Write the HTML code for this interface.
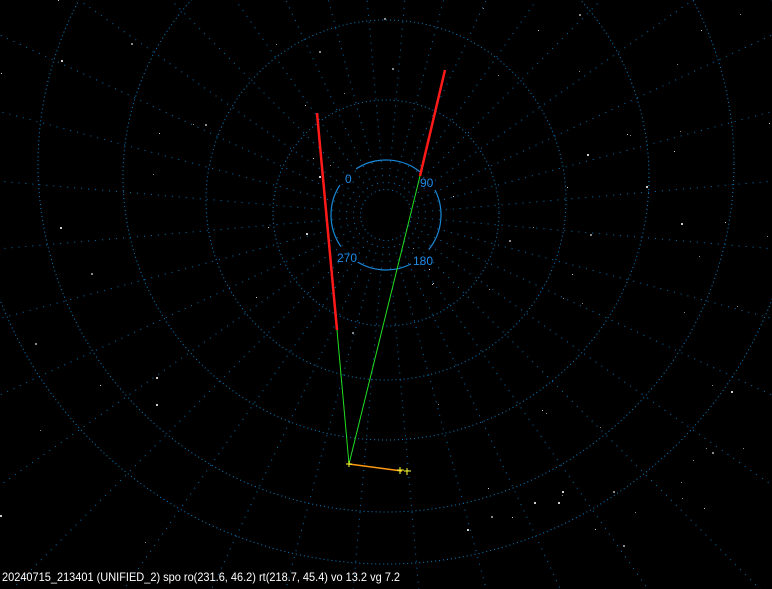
<!DOCTYPE html>
<html><head><meta charset="utf-8"><style>
html,body{margin:0;padding:0;background:#000;width:772px;height:589px;overflow:hidden}
svg{display:block;position:absolute;left:0;top:0}
</style></head><body>
<svg id="s" width="772" height="589" viewBox="0 0 772 589" xmlns="http://www.w3.org/2000/svg">
<rect width="772" height="589" fill="#000"/>
<g id="grid" fill="none" stroke="#0a7fc8" stroke-width="1" stroke-dasharray="1 3">
<circle cx="386" cy="213" r="113"/>
<circle cx="386" cy="200" r="180"/>
<circle cx="386" cy="177" r="263"/>
<circle cx="386" cy="164" r="348"/>
<circle cx="386" cy="150" r="414"/>
</g>
<g id="rad" fill="none" stroke="#0870b4" stroke-width="1" stroke-dasharray="1 6"></g>
<g id="stars"></g>
<g fill="none" stroke="#1a88d8" stroke-width="1.2">
<path id="a1"/><path id="a2"/><path id="a3"/><path id="a4"/>
</g>
<g font-family="Liberation Sans, sans-serif" font-size="12" fill="#1e8ae6">
<text x="345" y="183">0</text>
<text x="420" y="187">90</text>
<text x="337" y="262">270</text>
<text x="413" y="265">180</text>
</g>
<g fill="none">
<polyline points="317,113 337,330" stroke="#ff1a1a" stroke-width="2.5"/>
<polyline points="337,330 349,464" stroke="#22e022" stroke-width="1"/>
<polyline points="445,70 420,176" stroke="#ff1a1a" stroke-width="2.5"/>
<polyline points="420,176 349,464" stroke="#22e022" stroke-width="1"/>
<polyline points="349,464 402,471" stroke="#ff9a10" stroke-width="1.5"/>
<path d="M346,464h6M349,461v6M397,470h7M400,467v7M404,471h7M407,468v7" stroke="#ffff30" stroke-width="1"/>
</g>
<text x="2" y="581" font-family="Liberation Sans, sans-serif" font-size="12" fill="#fff" textLength="398" lengthAdjust="spacingAndGlyphs">20240715_213401 (UNIFIED_2) spo ro(231.6, 46.2) rt(218.7, 45.4) vo 13.2 vg 7.2</text>
</svg>
<script>
var cx=386,cy=215,ns="http://www.w3.org/2000/svg";
var g=document.getElementById('rad');
for(var i=0;i<36;i++){var a=(i*10+5)*Math.PI/180;var l=document.createElementNS(ns,'line');
l.setAttribute('x1',cx+25*Math.cos(a));l.setAttribute('y1',cy+25*Math.sin(a));
l.setAttribute('x2',cx+700*Math.cos(a));l.setAttribute('y2',cy+700*Math.sin(a));g.appendChild(l);}
function arc(id,a0,a1){var r=55,p=Math.PI/180;var x0=cx+r*Math.cos(a0*p),y0=cy+r*Math.sin(a0*p),x1=cx+r*Math.cos(a1*p),y1=cy+r*Math.sin(a1*p);
var d=((a1-a0+360)%360)>180?1:0;document.getElementById(id).setAttribute('d','M'+x0+','+y0+'A55,55 0 '+d+' 1 '+x1+','+y1);}
arc('a1',237,309);arc('a2',333,39);arc('a3',63,121);arc('a4',145,213);
var s=document.getElementById('stars'),seed=7;function rnd(){seed=(seed*16807)%2147483647;return seed/2147483647;}
for(var k=0;k<90;k++){var c=document.createElementNS(ns,'rect');c.setAttribute('x',Math.floor(rnd()*772));c.setAttribute('y',Math.floor(rnd()*560));
var b=rnd()<0.3?2:1;c.setAttribute('width',b);c.setAttribute('height',b);c.setAttribute('fill',rnd()<0.5?'#ccc':'#888');s.appendChild(c);}
</script>
</body></html>
